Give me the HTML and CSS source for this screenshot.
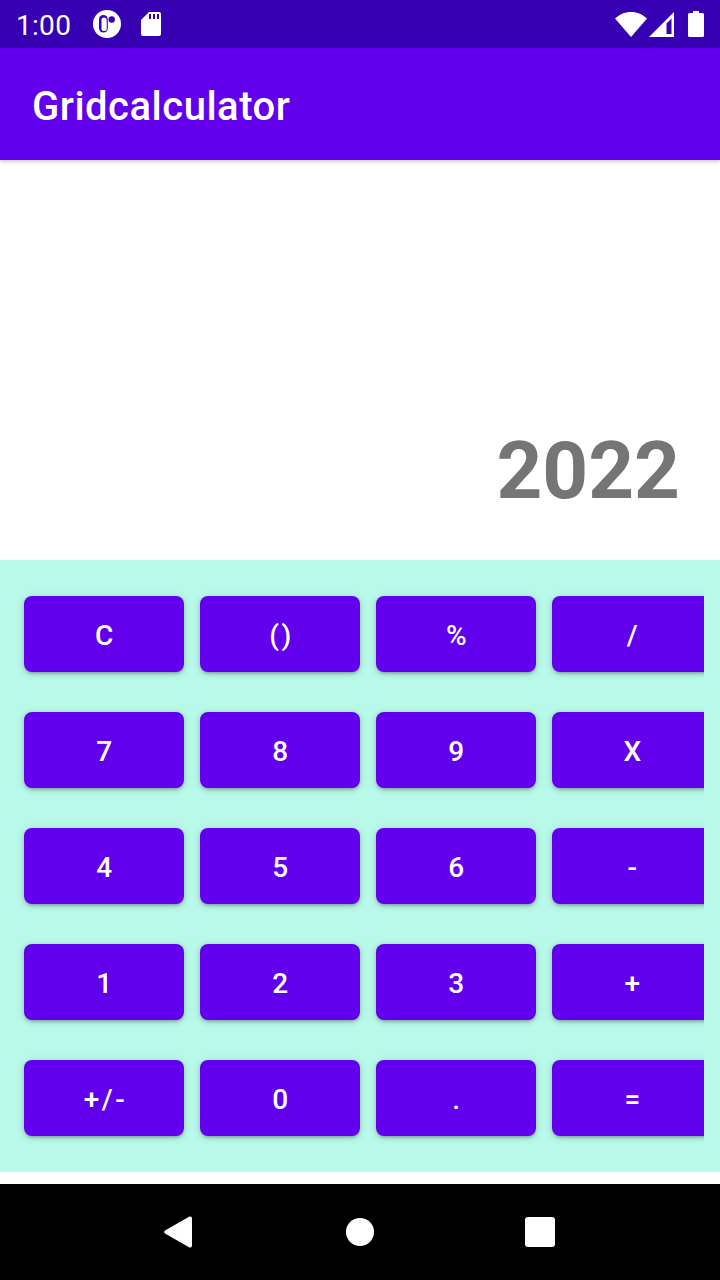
FILE: index.html
```html
<!DOCTYPE html>
<html>

<head>
	<meta charset="UTF-8">
	<title>Gridcalculator</title>
	<link rel="stylesheet" href="styles.css">
</head>

<body>
	<div class="screen">
		<!-- status bar -->
		<div class="status">
			<span class="time">1:00</span>
			<svg class="ic-app" width="28" height="28" viewBox="0 0 28 28">
				<circle cx="14" cy="14" r="14" fill="#fff" />
				<rect x="6" y="5" width="8.800" height="17.500" rx="4.400" fill="#3700b3" />
				<rect x="8.500" y="7.500" width="5.200" height="13.500" rx="2.600" fill="#fff" />
				<circle cx="18.700" cy="9.500" r="3.200" fill="#3700b3" />
			</svg>
			<svg class="ic-sd" width="20" height="24" viewBox="0 0 20 24">
				<path d="M8 0h10a2 2 0 0 1 2 2v20a2 2 0 0 1-2 2H2a2 2 0 0 1-2-2V8z" fill="#fff" />
				<path d="M8 2h2v5H8zM12 2h2v5h-2zM16 2h2v5h-2z" fill="#3700b3" />
			</svg>
			<span class="spacer"></span>
			<svg class="ic-wifi" width="32" height="25" viewBox="0 0 32 25">
				<path d="M16 25 0 6.500C4 2.700 9.500 0 16 0s12 2.700 16 6.500z" fill="#fff" />
			</svg>
			<svg class="ic-signal" width="25" height="25" viewBox="0 0 25 25">
				<path d="M25 0v25H0zM17.500 11.500V22h5V6.500z" fill="#fff" fill-rule="evenodd" />
			</svg>
			<svg class="ic-battery" width="16" height="26" viewBox="0 0 16 26">
				<path d="M5 0h6v2h3.500A1.500 1.500 0 0 1 16 3.500v21a1.500 1.500 0 0 1-1.500 1.500h-13A1.500 1.500 0 0 1 0 24.500v-21A1.500 1.500 0 0 1 1.500 2H5z" fill="#fff" />
			</svg>
		</div>

		<!-- app bar -->
		<div class="appbar">Gridcalculator</div>

		<!-- result -->
		<div class="display">
			<div class="result">2022</div>
		</div>

		<!-- keys -->
		<div class="keypad">
			<div class="keys">
				<button class="key">C</button>
				<button class="key">()</button>
				<button class="key">%</button>
				<button class="key">/</button>
				<button class="key">7</button>
				<button class="key">8</button>
				<button class="key">9</button>
				<button class="key">X</button>
				<button class="key">4</button>
				<button class="key">5</button>
				<button class="key">6</button>
				<button class="key">-</button>
				<button class="key">1</button>
				<button class="key">2</button>
				<button class="key">3</button>
				<button class="key">+</button>
				<button class="key">+/-</button>
				<button class="key">0</button>
				<button class="key">.</button>
				<button class="key">=</button>
			</div>
		</div>

		<div class="gap"></div>

		<!-- navigation bar -->
		<div class="navbar">
			<svg width="32" height="34" viewBox="0 0 32 34">
				<path d="M26.500 1.500a2 2 0 0 1 2.500 2v27a2 2 0 0 1-2.500 2L2 18.500a1.800 1.800 0 0 1 0-3z" fill="#fff" />
			</svg>
			<svg width="28" height="28" viewBox="0 0 28 28">
				<circle cx="14" cy="14" r="14" fill="#fff" />
			</svg>
			<svg width="30" height="30" viewBox="0 0 30 30">
				<rect width="30" height="30" rx="3" fill="#fff" />
			</svg>
		</div>
	</div>
</body>

</html>
```

FILE: styles.css
```css
* {
	margin: 0;
	padding: 0;
	box-sizing: border-box;
}

body {
	width: 720px;
	height: 1280px;
	overflow: hidden;
	background: #fff;
	font-family: Roboto, sans-serif;
}

.screen {
	display: flex;
	flex-direction: column;
	height: 1280px;
}

.status {
	display: flex;
	align-items: center;
	height: 48px;
	padding: 0 16px;
	background: #3700b3;
	color: #fff;
}

.time {
	font-size: 28px;
	letter-spacing: 0.300px;
	padding-top: 2px;
	margin-right: 22px;
}

.ic-sd {
	margin-left: 20px;
}

.spacer {
	flex: 1;
}

.ic-wifi {
	margin-right: 2px;
}

.ic-battery {
	margin-left: 14px;
}

.appbar {
	display: flex;
	align-items: center;
	height: 112px;
	padding: 4px 0 0 32px;
	background: #6200ee;
	color: #fff;
	font-size: 40px;
	font-weight: 500;
	letter-spacing: 0.500px;
	box-shadow: 0 2px 4px rgba(0, 0, 0, 0.2);
	position: relative;
}

.display {
	display: flex;
	align-items: flex-end;
	justify-content: flex-end;
	height: 400px;
	padding: 0 40px 42px 0;
}

.result {
	font-size: 80px;
	font-weight: 700;
	line-height: 94px;
	color: #757575;
}

.keypad {
	height: 612px;
	padding-right: 16px;
	background: #b9f9e9;
}

.keys {
	display: grid;
	grid-template-columns: repeat(4, 160px);
	grid-auto-rows: 76px;
	column-gap: 16px;
	row-gap: 40px;
	height: 612px;
	padding: 36px 0 0 24px;
	overflow: hidden;
}

.key {
	border: 0;
	border-radius: 8px;
	padding: 2px 0 0 3px;
	background: #6200ee;
	color: #fff;
	font-family: Roboto, sans-serif;
	font-size: 28px;
	font-weight: 500;
	letter-spacing: 2.500px;
	box-shadow: 0 3px 3px -2px rgba(0, 0, 0, 0.2), 0 2px 4px rgba(0, 0, 0, 0.14), 0 1px 8px rgba(0, 0, 0, 0.12);
}

.gap {
	height: 12px;
}

.navbar {
	display: flex;
	align-items: center;
	justify-content: space-between;
	height: 96px;
	padding: 0 165px 0 163px;
	background: #000;
}
```
